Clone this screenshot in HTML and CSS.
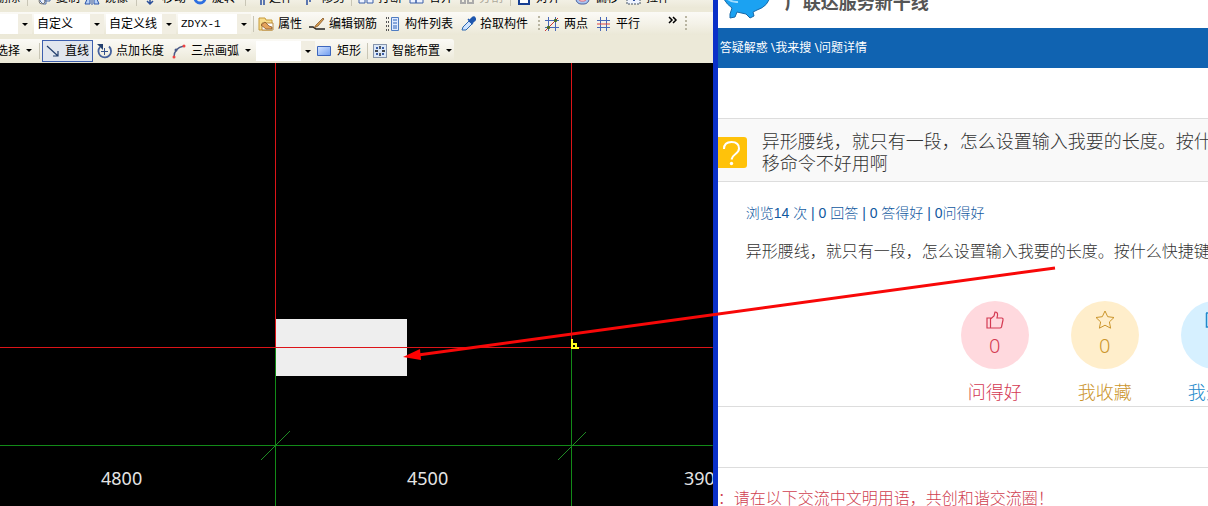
FILE: index.html
```html
<!DOCTYPE html>
<html lang="zh-CN">
<head>
<meta charset="utf-8">
<title>问题详情</title>
<link rel="stylesheet" href="styles.css">
</head>
<body>
<div class="screen">
  <section class="cad">
    <div class="toolbars">
      <div class="row row-edit">
        <button class="tool tail">删除</button>
        <span class="sep"></span>
        <button class="tool"><svg class="ico" viewBox="0 0 16 16"><path d="M4 4v7l3 3h3V7M9 5v6h5V5" fill="#e8eefc" stroke="#4a6ca8"/><circle cx="6" cy="11" r="3" fill="none" stroke="#777"/></svg>复制</button>
        <button class="tool"><svg class="ico" viewBox="0 0 16 16"><path d="M6 2v12H1zM10 2v12h5z" fill="#b9d2f8" stroke="#2c55a8"/><path d="M8 1v14" stroke="#2c55a8"/></svg>镜像</button>
        <span class="sep"></span>
        <button class="tool"><svg class="ico" viewBox="0 0 16 16"><path d="M8 2v12M5 11l3 3 3-3" fill="none" stroke="#2b4f9a" stroke-width="1.5"/></svg>移动</button>
        <button class="tool"><svg class="ico" viewBox="0 0 16 16"><circle cx="8" cy="8" r="5" fill="none" stroke="#2d6fe0" stroke-width="3"/></svg>旋转</button>
        <span class="sep"></span>
        <button class="tool"><svg class="ico" viewBox="0 0 16 16"><path d="M12 2v13M15 2v13" stroke="#2b4fa0" stroke-width="1.5"/></svg>延伸</button>
        <button class="tool"><svg class="ico" viewBox="0 0 16 16"><path d="M6 2v13M9 2v10" stroke="#2b4fa0" stroke-width="1.5"/></svg>修剪</button>
        <span class="sep"></span>
        <button class="tool"><svg class="ico" viewBox="0 0 16 16"><path d="M1 4h6v9H1zM9 4h6v9H9z" fill="#eef3ff" stroke="#3a5ea8"/></svg>打断</button>
        <button class="tool"><svg class="ico" viewBox="0 0 16 16"><path d="M1 4h6v9H1zM7 4h7v9H7z" fill="#eef3ff" stroke="#3a5ea8"/></svg>合并</button>
        <button class="tool" disabled><svg class="ico" viewBox="0 0 16 16"><path d="M2 4h4v9H2zM9 4h5v9H9z" fill="none" stroke="#aaa" stroke-width="2"/></svg>分割</button>
        <span class="sep"></span>
        <button class="tool"><svg class="ico" viewBox="0 0 16 16"><path d="M3 3h10v11H3z" fill="#fff" stroke="#173f92" stroke-width="2"/><path d="M6 9h5" stroke="#d33"/></svg>对齐</button>
        <button class="tool"><svg class="ico" viewBox="0 0 16 16"><rect x="1" y="3" width="13" height="11" rx="5" fill="#a9c4f0" stroke="#4860a0"/><rect x="4" y="5" width="7" height="6" rx="2" fill="#fff" stroke="#e06070"/></svg>偏移</button>
        <button class="tool"><svg class="ico" viewBox="0 0 16 16"><path d="M1 4h13v10H1z" fill="#eef3ff" stroke="#456" stroke-dasharray="2 1"/><path d="M8 5v6" stroke="#2b4fa0" stroke-width="2"/></svg>拉伸</button>
      </div>

      <div class="row row-component">
        <label class="combo"><select aria-label="楼层"><option></option></select></label>
        <label class="combo"><select aria-label="构件类型"><option>自定义</option></select></label>
        <label class="combo"><select aria-label="构件"><option>自定义线</option></select></label>
        <label class="combo mono"><select aria-label="名称"><option>ZDYX-1</option></select></label>
        <span class="sep"></span>
        <button class="tool"><svg class="ico" viewBox="0 0 16 16"><path d="M1 2h6l1 2h6v10H1z" fill="#f8dd8c" stroke="#c79a3a"/><path d="M4 7h11v7H4z" fill="#fff" stroke="#b98a40"/><path d="M3 9l4-3 4 4 3 1v2H8z" fill="#e5a35b" stroke="#7b4a1e" stroke-width=".7"/></svg>属性</button>
        <button class="tool"><svg class="ico" viewBox="0 0 16 16"><path d="M0 11h4l3 2h9" fill="none" stroke="#222" stroke-width="1.5"/><path d="M14 2L7 9l-2 3 4-2 6-7z" fill="#d9a050" stroke="#7a4a20" stroke-width=".7"/></svg>编辑钢筋</button>
        <button class="tool"><svg class="ico" viewBox="0 0 16 16"><path d="M1 2h3M1 6h3M1 10h3M1 14h3" stroke="#555" stroke-dasharray="1 1" stroke-width="2"/><path d="M6.500 1.500h7v13h-7z" fill="#dfeaff" stroke="#4f7cc2"/><path d="M8 4h4M8 7h4M8 10h4M8 12h4" stroke="#2d62b8"/></svg>构件列表</button>
        <button class="tool"><svg class="ico" viewBox="0 0 16 16"><path d="M2 14l1-3 6-6 3 3-6 6z" fill="#cfe4ff" stroke="#2a66b0"/><path d="M8 3l5 5M9 5l3-3q2-2 3 0t-1 3l-2 2z" fill="#1f57ae" stroke="#1f57ae" stroke-width="1.500"/></svg>拾取构件</button>
        <span class="grip"></span>
        <button class="tool"><svg class="ico" viewBox="0 0 16 16"><path d="M4.500 1v14M11.500 1v14M1 4.500h14M1 11.500h14" stroke="#4767b8"/><path d="M1 15L14 2" stroke="#c33"/><circle cx="4.500" cy="11.500" r="1.700" fill="#476b25"/><circle cx="11.500" cy="4.500" r="1.700" fill="#476b25"/></svg>两点</button>
        <button class="tool"><svg class="ico" viewBox="0 0 16 16"><path d="M4.500 1v14M10.500 1v14M1 4.500h13M1 11.500h13" stroke="#4767b8"/><path d="M1 8h13" stroke="#d44"/></svg>平行</button>
        <button class="more" aria-label="更多"><svg class="chev" viewBox="0 0 10 8"><path d="M1 1l3 3-3 3M5 1l3 3-3 3" fill="none" stroke="#000" stroke-width="1.500"/></svg></button>
        <span class="grip"></span>
      </div>

      <div class="row row-draw">
        <button class="tool tail">选择<i class="caret"></i></button>
        <span class="sep"></span>
        <button class="tool active"><svg class="ico" viewBox="0 0 16 16"><path d="M2 3l11 10M13 8v5H8" fill="none" stroke="#24406e" stroke-width="1.200"/></svg>直线</button>
        <button class="tool"><svg class="ico" viewBox="0 0 16 16"><path d="M4 4a6.300 6.300 0 1 0 9-.5" fill="none" stroke="#44609c" stroke-width="1.800"/><path d="M1 1h6v6z" fill="#24406e"/><path d="M8.500 5v7M5 8.500h7" stroke="#34518c"/></svg>点加长度</button>
        <button class="tool"><svg class="ico" viewBox="0 0 16 16"><path d="M3 14Q3 5 13 3" fill="none" stroke="#4a5a88" stroke-width="1.300"/><circle cx="3" cy="14" r="1.500" fill="#e44"/><circle cx="5" cy="7" r="1.500" fill="#4a5a88"/><circle cx="13" cy="3" r="1.500" fill="#e44"/></svg>三点画弧<i class="caret"></i></button>
        <label class="combo"><select aria-label="画弧方式"><option></option></select></label>
        <button class="tool"><svg class="ico" viewBox="0 0 16 16"><defs><linearGradient id="box" x2="1" y2="1"><stop stop-color="#d7e6ff"/><stop offset="1" stop-color="#6f9cf0"/></linearGradient></defs><path d="M.5 3.500h13v9H.5z" fill="url(#box)" stroke="#3d66bd"/></svg>矩形</button>
        <span class="sep"></span>
        <button class="tool"><svg class="ico" viewBox="0 0 16 16"><path d="M1.500 1.500h13v13h-13z" fill="#dce8f8" stroke="#223a66" stroke-dasharray="1 1"/><path d="M8 3v3M8 10v3M3 8h3M10 8h3" stroke="#111" stroke-width="1.300"/><path d="M4 4h2v2H4zM10 4h2v2h-2zM4 10h2v2H4zM10 10h2v2h-2z" fill="#3a5ea8"/></svg>智能布置<i class="caret"></i></button>
      </div>
    </div>

    <svg class="drawing" role="img" aria-label="轴网">
      <rect x="276" y="256" width="131" height="57" fill="#eeeeee"/>
      <g fill="#128a18">
        <rect x="275" y="284" width="1" height="100%"/>
        <rect x="571" y="284" width="1" height="100%"/>
        <rect x="0" y="382" width="100%" height="1"/>
      </g>
      <g fill="#dc1418">
        <rect x="275" y="0" width="1" height="284"/>
        <rect x="571" y="0" width="1" height="284"/>
        <rect x="0" y="284" width="100%" height="1"/>
      </g>
      <path d="M261 397l29-29M558 397l28-28" stroke="#1f8a24" stroke-width="1"/>
      <path d="M572 276v9h7M572 281h4v3" fill="none" stroke="#ffff20" stroke-width="2"/>
      <g class="dims">
        <text x="101" y="422">4800</text>
        <text x="407" y="422">4500</text>
        <text x="684" y="422">3900</text>
      </g>
    </svg>
  </section>

  <main class="page">
    <header class="brand">
      <svg class="logo" viewBox="0 0 56 48"><path d="M2 16Q6 0 28 0t24 24q-1 11-13 15l-4 2 1 4-4 2-4-4-9-2-2 5-5 1v-4l2-6Q4 30 2 16z" fill="#1ba2f2" stroke="#1769a8"/><path d="M6 24q6 8 14 7" fill="none" stroke="#9ddcff" stroke-width="2"/></svg>
      <span class="name">广联达服务新干线</span>
    </header>
    <nav class="crumbs"><a href="#">答疑解惑</a> \<a href="#">我来搜</a> \<a href="#">问题详情</a></nav>
    <div class="question">
      <svg class="mark" viewBox="0 0 29 31"><path d="M0 0h26q3 0 3 3v25q0 3-3 3H0z" fill="#ffc20a"/><path d="M6 12q0-7 7.500-7T21 11.500q0 3-3.500 5.500t-4 5.500" fill="none" stroke="#fff" stroke-width="2"/><circle cx="13.500" cy="26.500" r="1.700" fill="#fff"/></svg>
      <h1 class="title">异形腰线，就只有一段，怎么设置输入我要的长度。按什么快捷键<br>移命令不好用啊</h1>
    </div>
    <div class="content">
      <p class="stats">浏览14 次 | 0 回答 | 0 答得好 | 0问得好</p>
      <p class="text">异形腰线，就只有一段，怎么设置输入我要的长度。按什么快捷键</p>
    </div>
    <div class="actions">
      <button class="action red"><span class="disc"><svg class="glyph" viewBox="0 0 20 20"><path d="M2 8h3.500v10H2zM5.500 9L9 6l1-4q3 0 2.500 3.500L12 8h5q1.500.5 1 2l-1.500 7q-.5 1-1.500 1H5.500" fill="none" stroke="currentColor" stroke-width="1.200"/></svg><span class="count">0</span></span>问得好</button>
      <button class="action gold"><span class="disc"><svg class="glyph" viewBox="0 0 20 20"><path d="M10 1l2.700 5.700 6.300.8-4.600 4.400 1.200 6.300-5.600-3-5.600 3 1.200-6.300L1 7.500l6.300-.8z" fill="none" stroke="currentColor" stroke-linejoin="round"/></svg><span class="count">0</span></span>我收藏</button>
      <button class="action blue"><span class="disc"><svg class="glyph" viewBox="0 0 20 20"><path d="M1 3h8M1.500 3v14h15v-5M8 11q1-7 10-7M14 1l4 3-4 4" fill="none" stroke="currentColor" stroke-width="1.500"/></svg><span class="count">0</span></span>我分享</button>
    </div>
    <p class="notice">：请在以下交流中文明用语，共创和谐交流圈！</p>
  </main>

  <svg class="pointer" aria-hidden="true">
    <path d="M1055 268L418 355" stroke="#f80808" stroke-width="3"/>
    <path d="M403 357l17-8 1 11z" fill="#ff0000"/>
  </svg>
</div>
</body>
</html>
```

FILE: styles.css
```css
* { box-sizing: border-box; }
body {
  margin: 0;
  font-family: "Noto Sans", "Noto Sans CJK SC", sans-serif;
  overflow: hidden;
}
button, select { font: inherit; color: inherit; border: 0; background: none; padding: 0; margin: 0; }
p, h1 { margin: 0; }

.screen { position: relative; display: flex; min-height: 100vh; }
.cad { flex: 0 0 59%; min-width: 0; display: flex; flex-direction: column; overflow: hidden; background: #000; }

.toolbars {
  display: flex; flex-direction: column; gap: 4px;
  padding-bottom: 1px; overflow: hidden; flex: none;
  background: #ece9d8; color: #000;
  font: 12px/16px "Liberation Sans", "Noto Sans CJK SC", sans-serif;
}
.row { display: grid; align-items: center; height: 23px; white-space: nowrap; background: linear-gradient(#fbfaf6, #f4f2e8 50%, #ebe8d7); }
.row-edit { height: 20px; margin-top: -12px; grid-template-columns: 27px 9px 48px 52px 6px 50px 53px 4px 52px 50px 7px 51px 50px 51px 6px 59px 51px 1fr; }
.row-component { grid-template-columns: 34px 72px 72px 75px 5px 51px 76px 75px 78px 6px 52px 72px 17px 1fr; }
.row-draw { width: 454px; border-radius: 0 3px 3px 0; grid-template-columns: 39px 3px 54px 75px 85px 61px 50px 5px 1fr; }

.tool { display: flex; align-items: center; gap: 4px; height: 20px; }
.tool:disabled { color: #aca899; }
.tool.tail { justify-content: flex-end; padding-right: 7px; }
.tool.active { width: 51px; height: 22px; padding-left: 2px; border: 1px solid #3d5fae; background: #e1e6ee; }
.ico { width: 16px; height: 16px; flex: none; }
.caret { flex: none; margin-left: 2px; border: 3px solid transparent; border-top-color: #000; border-bottom: 0; }
.sep { width: 1px; height: 16px; background: #c9c6b6; }
.grip { width: 2px; height: 15px; background: repeating-linear-gradient(#b9b5a2 0 2px, transparent 2px 4px); }
.more { align-self: start; padding-top: 4px; display: flex; }
.chev { width: 10px; height: 8px; }

.combo { position: relative; display: flex; height: 20px; margin-right: 2px; background: linear-gradient(to right, #fff calc(100% - 14px), #f1eee2 0); }
.combo select { appearance: none; width: 100%; padding-left: 3px; cursor: pointer; }
.combo::after { content: ""; position: absolute; right: 4px; top: 9px; border: 3px solid transparent; border-top-color: #000; border-bottom: 0; pointer-events: none; }
.mono { font-family: "Liberation Mono", monospace; font-size: 11px; }

.drawing { display: block; flex: 1; width: 100%; min-height: 0; }
.dims { fill: #e4e4e4; font-size: 18px; }

.page { flex: 1; min-width: 0; overflow: hidden; white-space: nowrap; background: #fff; border-left: 5px solid #0a30c8; color: #333; }
.brand { display: flex; align-items: flex-end; gap: 11px; height: 28px; padding-bottom: 9px; }
.logo { flex: none; width: 56px; height: 48px; }
.name { padding-bottom: 5px; font-size: 18px; line-height: 24px; font-weight: 700; color: #555; }
.crumbs { height: 40px; padding-left: 2px; background: #1063b1; color: #fff; font-size: 12px; line-height: 40px; }
.crumbs a { color: inherit; text-decoration: none; }
.question { display: flex; align-items: center; gap: 15px; margin-top: 50px; height: 64px; padding-top: 4px; background: #f9f9f9; border: solid #ddd; border-width: 1px 0; }
.mark { flex: none; width: 29px; height: 31px; }
.title { font-size: 18px; line-height: 22px; font-weight: 300; }
.content { padding: 20px 0 0 28px; }
.stats { font: 300 14px/22px "Liberation Sans", "Noto Sans CJK SC", sans-serif; color: #1058a0; }
.text { margin-top: 15px; font-size: 16px; line-height: 24px; font-weight: 300; }
.actions { display: flex; gap: 42px; margin-top: 38px; padding-left: 243px; border-bottom: 1px solid #ddd; }
.action { flex: 0 0 68px; display: flex; flex-direction: column; align-items: center; gap: 10px; padding-bottom: 1px; font-size: 18px; line-height: 26px; font-weight: 300; cursor: pointer; }
.disc { display: flex; flex-direction: column; align-items: center; width: 68px; height: 68px; padding-top: 9px; border-radius: 50%; }
.glyph { width: 20px; height: 20px; }
.count { font-size: 20px; line-height: 32px; }
.red { color: #d43a52; } .red .disc { background: #ffd9de; }
.gold { color: #cb952c; } .gold .disc { background: #ffeecb; }
.blue { color: #2389cb; } .blue .disc { background: #d6f0ff; }
.notice { margin-top: 60px; padding-top: 18px; border-top: 1px solid #ddd; font-size: 16px; line-height: 24px; font-weight: 300; color: #d04050; }

.pointer { position: absolute; inset: 0; width: 100%; height: 100%; pointer-events: none; }
```
